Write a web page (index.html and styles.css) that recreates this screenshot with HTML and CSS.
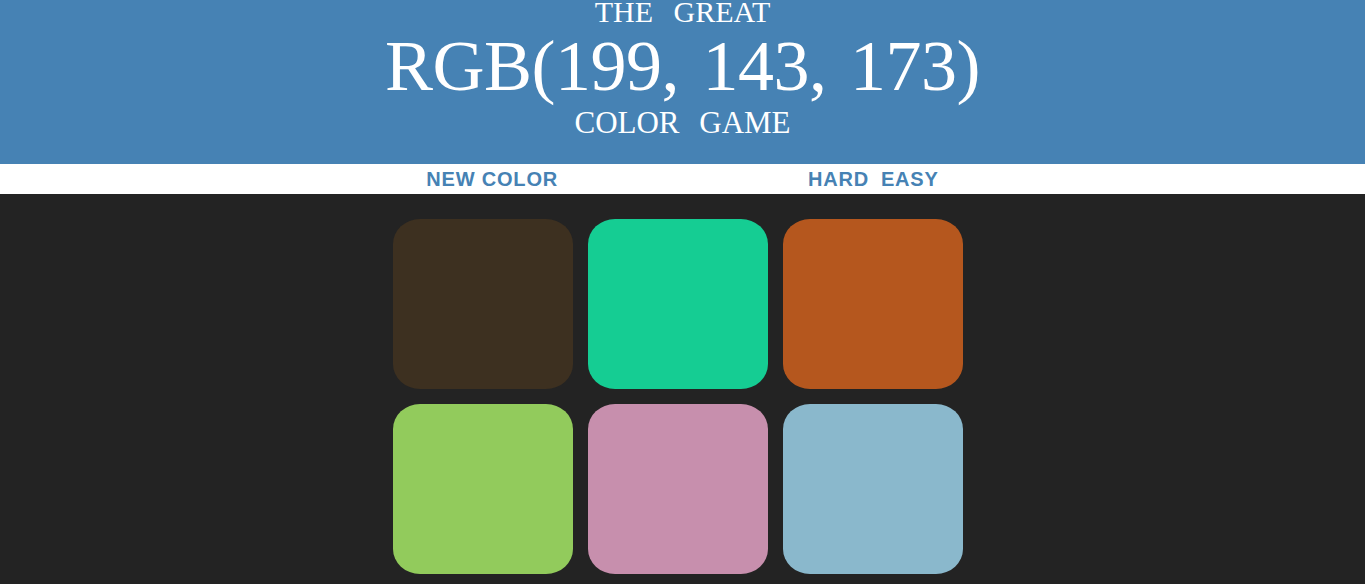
FILE: index.html
```html
<!DOCTYPE html>
<html>
<head>
<meta charset="utf-8">
<title>Color Game</title>
<link rel="stylesheet" href="styles.css">
</head>
<body>
<h1 class="title">
  <span class="title-line title-top">The Great</span>
  <span class="title-line color-display">RGB(199, 143, 173)</span>
  <span class="title-line title-bottom">Color Game</span>
</h1>
<div class="stripe">
  <button class="btn">New Color</button>
  <span class="message"></span>
  <button class="btn">Hard</button>
  <button class="btn">Easy</button>
</div>
<div class="container">
  <div class="square sq-1"></div>
  <div class="square sq-2"></div>
  <div class="square sq-3"></div>
  <div class="square sq-4"></div>
  <div class="square sq-5"></div>
  <div class="square sq-6"></div>
</div>
</body>
</html>
```

FILE: styles.css
```css
html, body {
  margin: 0;
  padding: 0;
}
body {
  background: #232323;
  font-family: "Liberation Serif", "Times New Roman", serif;
  overflow: hidden;
}
.title {
  margin: 0;
  padding: 0 0 27px 0;
  background: #4682b4;
  color: #fff;
  text-align: center;
  font-weight: normal;
  text-transform: uppercase;
}
.title-line {
  display: block;
  white-space: nowrap;
}
.title-top {
  font-size: 30px;
  line-height: 24px;
  word-spacing: 13px;
}
.color-display {
  font-size: 72px;
  line-height: 85px;
  letter-spacing: -0.5px;
  word-spacing: 6px;
}
.title-bottom {
  font-size: 31px;
  line-height: 28px;
  word-spacing: 12px;
}
.stripe {
  height: 30px;
  background: #fff;
  display: flex;
  justify-content: center;
  align-items: center;
}
.btn {
  border: none;
  background: none;
  margin: 0;
  padding: 0 6px;
  height: 30px;
  font-family: "Liberation Sans", Arial, sans-serif;
  font-weight: 700;
  font-size: 20px;
  letter-spacing: 0.8px;
  text-transform: uppercase;
  color: #4682b4;
  outline: none;
}
.message {
  width: 238px;
}
.container {
  width: 600px;
  margin: 25px auto 0;
  padding-left: 10px;
  box-sizing: border-box;
  display: grid;
  grid-template-columns: repeat(3, 180px);
  grid-auto-rows: 170px;
  gap: 15px;
}
.square {
  border-radius: 27px / 25px;
}
.sq-1 { background: #3d3020; }
.sq-2 { background: #15cd93; }
.sq-3 { background: #b5571e; }
.sq-4 { background: #92cb5c; }
.sq-5 { background: #c78fad; }
.sq-6 { background: #8ab8cc; }
```
